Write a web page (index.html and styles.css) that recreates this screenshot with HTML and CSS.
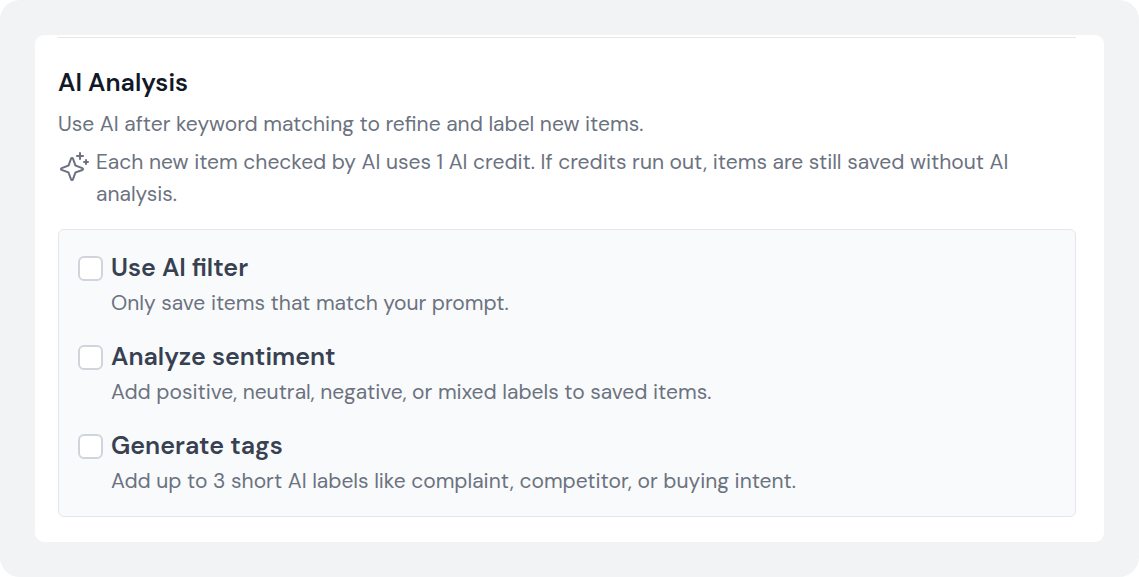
FILE: index.html
```html
<!DOCTYPE html>
<html lang="en">
<head>
<meta charset="utf-8">
<title>AI Analysis</title>
<link rel="stylesheet" href="styles.css">
</head>
<body>
<main class="frame">
  <section class="card">
    <div class="section">
      <h2 class="title">AI Analysis</h2>
      <p class="lead">Use AI after keyword matching to refine and label new items.</p>
      <div class="note">
        <svg class="note-icon" viewBox="0 0 256 256" fill="currentColor" aria-hidden="true"><path d="M197.58,129.06,146,110l-19-51.62a15.92,15.92,0,0,0-29.88,0L78,110l-51.62,19a15.92,15.92,0,0,0,0,29.88L78,178l19,51.62a15.92,15.92,0,0,0,29.88,0L146,178l51.62-19a15.92,15.92,0,0,0,0-29.88ZM137,164.22a8,8,0,0,0-4.74,4.74L112,223.85,91.78,169A8,8,0,0,0,87,164.22L32.15,144,87,123.78A8,8,0,0,0,91.78,119L112,64.15,132.22,119a8,8,0,0,0,4.74,4.74L191.85,144ZM144,40a8,8,0,0,1,8-8h16V16a8,8,0,0,1,16,0V32h16a8,8,0,0,1,0,16H184V64a8,8,0,0,1-16,0V48H152A8,8,0,0,1,144,40ZM248,88a8,8,0,0,1-8,8h-8v8a8,8,0,0,1-16,0V96h-8a8,8,0,0,1,0-16h8V72a8,8,0,0,1,16,0v8h8A8,8,0,0,1,248,88Z"/></svg>
        <p class="note-text">Each new item checked by AI uses 1 AI credit. If credits run out, items are still saved without AI analysis.</p>
      </div>
      <div class="options">
        <div class="option">
          <input class="check" type="checkbox" id="filter" aria-describedby="filter-help">
          <div><label class="label" for="filter">Use AI filter</label><p class="help" id="filter-help">Only save items that match your prompt.</p></div>
        </div>
        <div class="option">
          <input class="check" type="checkbox" id="sentiment" aria-describedby="sentiment-help">
          <div><label class="label" for="sentiment">Analyze sentiment</label><p class="help" id="sentiment-help">Add positive, neutral, negative, or mixed labels to saved items.</p></div>
        </div>
        <div class="option">
          <input class="check" type="checkbox" id="tags" aria-describedby="tags-help">
          <div><label class="label" for="tags">Generate tags</label><p class="help" id="tags-help">Add up to 3 short AI labels like complaint, competitor, or buying intent.</p></div>
        </div>
      </div>
    </div>
  </section>
</main>
</body>
</html>
```
FILE: styles.css
```css
* { box-sizing: border-box; }
body { margin: 0; background: #fff; color: #6b7280; font-family: "DM Sans", "Open Sans", sans-serif; font-size: 21px; line-height: 32px; }
h2, p { margin: 0; }
.frame { min-height: 100vh; padding: 35px; border-radius: 20px; background: #f1f3f5; }
.card { padding: 2px 28px 25px 23px; border-radius: 9px; background: #fff; }
.section { padding-top: 29px; border-top: 1px solid #e5e7eb; }
.title { color: #111827; font-size: 25px; font-weight: 600; line-height: 32px; }
.lead { margin-top: 9px; }
.note { display: flex; gap: 6px; margin-top: 6px; }
.note-icon { flex: none; width: 32px; height: 32px; margin-top: 5px; }
.options { display: grid; gap: 20px; margin-top: 19px; padding: 20px 19px 19px; border: 1px solid #e5e7eb; border-radius: 6px; background: #f9fafb; }
.option { display: flex; gap: 8px; }
.check { flex: none; appearance: none; width: 25px; height: 25px; margin: 6px 0 0; border: 2px solid #d1d5db; border-radius: 6px; background: #fff; }
.label { display: block; color: #374151; font-size: 25px; font-weight: 600; line-height: 36px; }
.help { padding-top: 1px; }
```
